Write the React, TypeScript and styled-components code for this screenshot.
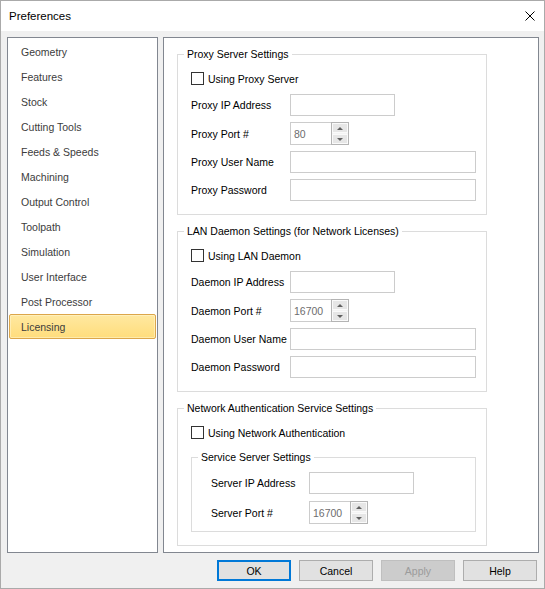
import React from 'react';
import styled, {createGlobalStyle, css} from 'styled-components';

const GlobalStyle = createGlobalStyle`
	html, body {
		margin: 0;
		padding: 0;
		background: #ffffff;
	}
	* {
		box-sizing: border-box;
	}
	body {
		font-family: "Liberation Sans", Arial, sans-serif;
		font-size: 10.5px;
		color: #000;
	}
`;

const Window = styled.div`
	width: 545px;
	height: 589px;
	border: 1px solid #aaaaaa;
	display: flex;
	flex-direction: column;
	background: #f0f0f0;
`;

const TitleBar = styled.div`
	height: 30px;
	flex: none;
	background: #ffffff;
	display: flex;
	align-items: center;
	justify-content: space-between;
	padding: 0 9px 0 8px;
`;

const Title = styled.span`
	font-size: 11.5px;
	color: #000;
`;

const CloseIcon = styled.svg`
	width: 10px;
	height: 10px;
	display: block;
`;

const Body = styled.div`
	flex: 1;
	display: flex;
	flex-direction: column;
	padding: 6px 5px 0 6px;
`;

const Panels = styled.div`
	display: flex;
	gap: 5px;
	height: 516px;
`;

const ListPanel = styled.div`
	width: 151px;
	background: #ffffff;
	border: 1px solid #828790;
	padding: 1px 1px;
	display: flex;
	flex-direction: column;
`;

const ListItem = styled.div<{ $selected?: boolean }>`
	height: 25px;
	display: flex;
	align-items: center;
	padding-left: 11px;
	border: 1px solid transparent;
	border-radius: 2px;
	color: #3c3c3c;
	${p => p.$selected && css`
		background: linear-gradient(#ffe8a0, #ffdd7c);
		border-color: #dca64a;
		box-shadow: inset 0 0 0 1px rgba(255, 245, 210, 0.55);
	`}
`;

const SettingsPanel = styled.div`
	width: 376px;
	background: #ffffff;
	border: 1px solid #828790;
	padding: 16px 0 0 13px;
	display: flex;
	flex-direction: column;
	gap: 16px;
`;

const Group = styled.div<{ $width: number; $inset?: boolean }>`
	position: relative;
	width: ${p => p.$width}px;
	border: 1px solid #dcdcdc;
	padding: ${p => p.$inset ? '14px 10px 7px 19px' : '17px 10px 13px 13px'};
`;

const Caption = styled.span`
	position: absolute;
	top: -7px;
	left: 6px;
	padding: 0 3px;
	line-height: 13px;
	background: #ffffff;
	white-space: nowrap;
`;

const CheckRow = styled.label`
	display: flex;
	align-items: center;
	gap: 4px;
	height: 13px;
`;

const CheckBox = styled.span`
	width: 13px;
	height: 13px;
	border: 1px solid #333333;
	background: #ffffff;
	flex: none;
`;

const Fields = styled.div<{ $labelWidth: number; $inset?: boolean }>`
	display: grid;
	grid-template-columns: ${p => p.$labelWidth}px auto;
	row-gap: ${p => p.$inset ? 7 : 6}px;
	align-items: center;
	margin-top: ${p => p.$inset ? 0 : 9}px;
`;

const Label = styled.span`
	white-space: nowrap;
`;

const TextBox = styled.div<{ $wide?: boolean }>`
	width: ${p => p.$wide ? 186 : 105}px;
	height: 22px;
	border: 1px solid #cccccc;
	background: #ffffff;
`;

const Spinner = styled.div`
	display: flex;
	width: 59px;
	height: 23px;
`;

const SpinValue = styled.div`
	flex: 1;
	border: 1px solid #cccccc;
	border-right: none;
	color: #6d6d6d;
	display: flex;
	align-items: center;
	padding-left: 3px;
`;

const SpinButtons = styled.div`
	width: 18px;
	border: 1px solid #b4b4b4;
	display: flex;
	flex-direction: column;
	gap: 1px;
	background: #f4f4f4;
`;

const SpinButton = styled.div<{ $down?: boolean }>`
	flex: 1;
	background: #e6e6e6;
	border: 1px solid #fafafa;
	display: flex;
	align-items: center;
	justify-content: center;

	&::after {
		content: '';
		border-left: 3px solid transparent;
		border-right: 3px solid transparent;
		${p => p.$down
			? css`border-top: 3px solid #606060;`
			: css`border-bottom: 3px solid #606060;`}
	}
`;

const InnerWrap = styled.div`
	margin-top: 18px;
`;

const ButtonRow = styled.div`
	display: flex;
	justify-content: flex-end;
	gap: 8px;
	margin-top: 7px;
	padding-right: 2px;
`;

const DialogButton = styled.button<{ $default?: boolean }>`
	width: 74px;
	height: 21px;
	padding: 0;
	font-family: inherit;
	font-size: 10.5px;
	color: #000;
	background: #e1e1e1;
	border: 1px solid #adadad;
	${p => p.$default && css`
		border: 2px solid #0078d7;
	`}
	&:disabled {
		background: #cccccc;
		border-color: #bfbfbf;
		color: #9b9b9b;
	}
`;

const pages = [
	'Geometry', 'Features', 'Stock', 'Cutting Tools', 'Feeds & Speeds', 'Machining',
	'Output Control', 'Toolpath', 'Simulation', 'User Interface', 'Post Processor', 'Licensing',
];

const PortSpinner = ({value}: { value: string }) => (
	<Spinner>
		<SpinValue>{value}</SpinValue>
		<SpinButtons>
			<SpinButton/>
			<SpinButton $down/>
		</SpinButtons>
	</Spinner>
);

const Check = ({label}: { label: string }) => (
	<CheckRow>
		<CheckBox/>
		<span>{label}</span>
	</CheckRow>
);

// proxy and daemon groups share one layout
const ServerGroup = ({title, check, prefix, port}: { title: string; check: string; prefix: string; port: string }) => (
	<Group $width={310}>
		<Caption>{title}</Caption>
		<Check label={check}/>
		<Fields $labelWidth={99}>
			<Label>{prefix} IP Address</Label>
			<TextBox/>
			<Label>{prefix} Port #</Label>
			<PortSpinner value={port}/>
			<Label>{prefix} User Name</Label>
			<TextBox $wide/>
			<Label>{prefix} Password</Label>
			<TextBox $wide/>
		</Fields>
	</Group>
);

export default function App() {
	return (
		<>
			<GlobalStyle/>
			<Window>
				<TitleBar>
					<Title>Preferences</Title>
					<CloseIcon viewBox="0 0 10 10">
						<path d="M0.5 0.5 L9.5 9.5 M9.5 0.5 L0.5 9.5" stroke="#000" strokeWidth="1" fill="none"/>
					</CloseIcon>
				</TitleBar>
				<Body>
					<Panels>
						<ListPanel>
							{pages.map(name => (
								<ListItem key={name} $selected={name === 'Licensing'}>{name}</ListItem>
							))}
						</ListPanel>
						<SettingsPanel>
							<ServerGroup title="Proxy Server Settings" check="Using Proxy Server" prefix="Proxy" port="80"/>
							<ServerGroup title="LAN Daemon Settings (for Network Licenses)" check="Using LAN Daemon" prefix="Daemon" port="16700"/>
							<Group $width={310}>
								<Caption>Network Authentication Service Settings</Caption>
								<Check label="Using Network Authentication"/>
								<InnerWrap>
									<Group $width={285} $inset>
										<Caption>Service Server Settings</Caption>
										<Fields $labelWidth={98} $inset>
											<Label>Server IP Address</Label>
											<TextBox/>
											<Label>Server Port #</Label>
											<PortSpinner value="16700"/>
										</Fields>
									</Group>
								</InnerWrap>
							</Group>
						</SettingsPanel>
					</Panels>
					<ButtonRow>
						<DialogButton $default>OK</DialogButton>
						<DialogButton>Cancel</DialogButton>
						<DialogButton disabled>Apply</DialogButton>
						<DialogButton>Help</DialogButton>
					</ButtonRow>
				</Body>
			</Window>
		</>
	);
}
